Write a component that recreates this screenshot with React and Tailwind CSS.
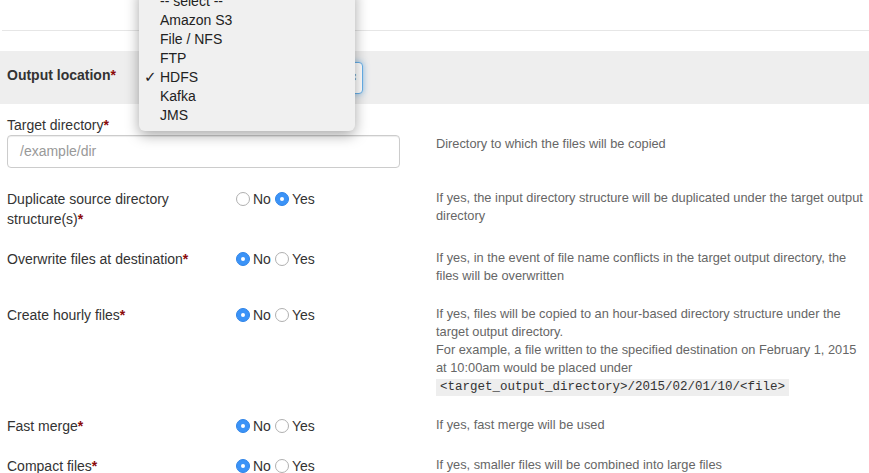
import React from "react";

const options = ["-- select --", "Amazon S3", "File / NFS", "FTP", "HDFS", "Kafka", "JMS"];

function Req() {
  return <span className="text-[#8b0a0a] font-bold">*</span>;
}

function Radio({ checked }) {
  if (checked) {
    return (
      <span className="w-[14px] h-[14px] rounded-full bg-[#3b93f7] border border-[#2f84e8] flex items-center justify-center shrink-0">
        <span className="w-[4px] h-[4px] rounded-full bg-white" />
      </span>
    );
  }
  return (
    <span className="w-[14px] h-[14px] rounded-full bg-white border border-[#b0b0b0] shrink-0" />
  );
}

function YesNo({ value }) {
  return (
    <div className="flex items-center h-[20px] text-[14px] text-[#333]">
      <Radio checked={value === "no"} />
      <span className="ml-[3px]">No</span>
      <span className="ml-[4px]" />
      <Radio checked={value === "yes"} />
      <span className="ml-[3px]">Yes</span>
    </div>
  );
}

function Row({ label, value, children }) {
  return (
    <div className="grid grid-cols-[229px_200px_1fr] mb-[20px]">
      <div className="text-[14px] leading-[20px] text-[#333] pr-4">{label}</div>
      <YesNo value={value} />
      <div className="text-[12.8px] leading-[18px] text-[#666] whitespace-nowrap">{children}</div>
    </div>
  );
}

export default function App() {
  return (
    <div
      className="relative w-full h-[473px] overflow-hidden bg-white"
      style={{ fontFamily: '"Liberation Sans", Arial, sans-serif' }}
    >
      <div className="h-[30px]" />
      <div className="ml-[2px] border-t border-[#e6e6e6]" />
      <div className="h-[20px]" />

      {/* Output location band */}
      <div className="h-[53px] bg-[#eeeeee] flex items-center pl-[7px]">
        <div className="w-[143px] pb-[4px] text-[14px] font-bold text-[#333]">
          Output location<Req />
        </div>
        <div className="w-[213px] h-[32px] bg-white border border-[#66afe9] rounded-[4px] shadow-[0_0_6px_rgba(102,175,233,0.7)] flex items-center justify-end pr-[4px] text-[11px] text-[#555]">
          ⇕
        </div>
      </div>

      {/* Target directory */}
      <div className="grid grid-cols-[429px_1fr] pl-[7px] mt-[11px]">
        <div>
          <div className="text-[14px] leading-[20px] text-[#333]">
            Target directory<Req />
          </div>
          <div className="w-[393px] h-[33px] border border-[#cccccc] rounded-[4px] flex items-center px-[12px] text-[14px] text-[#999] shadow-[inset_0_1px_1px_rgba(0,0,0,0.075)]">
            /example/dir
          </div>
        </div>
        <div className="pt-[20px] text-[12.8px] leading-[18px] text-[#666]">
          Directory to which the files will be copied
        </div>
      </div>

      <div className="pl-[7px] mt-[21px]">
        <Row
          value="yes"
          label={
            <>
              Duplicate source directory
              <br />
              structure(s)<Req />
            </>
          }
        >
          If yes, the input directory structure will be duplicated under the target output
          <br />
          directory
        </Row>
        <Row
          value="no"
          label={
            <>
              Overwrite files at destination<Req />
            </>
          }
        >
          If yes, in the event of file name conflicts in the target output directory, the
          <br />
          files will be overwritten
        </Row>
        <Row
          value="no"
          label={
            <>
              Create hourly files<Req />
            </>
          }
        >
          If yes, files will be copied to an hour-based directory structure under the
          <br />
          target output directory.
          <br />
          For example, a file written to the specified destination on February 1, 2015
          <br />
          at 10:00am would be placed under
          <br />
          <code
            className="inline-block mt-[1px] px-[4px] leading-[17px] bg-[#eeeeee] text-[#333] text-[12.5px]"
            style={{ fontFamily: '"Liberation Mono", "Courier New", monospace' }}
          >
            &lt;target_output_directory&gt;/2015/02/01/10/&lt;file&gt;
          </code>
        </Row>
        <Row
          value="no"
          label={
            <>
              Fast merge<Req />
            </>
          }
        >
          If yes, fast merge will be used
        </Row>
        <Row
          value="no"
          label={
            <>
              Compact files<Req />
            </>
          }
        >
          If yes, smaller files will be combined into large files
        </Row>
      </div>

      {/* Open native-style select menu */}
      <div className="absolute left-[139px] top-[-12px] w-[216px] bg-[#f0f0f0] rounded-b-[6px] shadow-[0_4px_14px_rgba(0,0,0,0.35)] pt-[4px] pb-[6px]">
        {options.map((o) => (
          <div key={o} className="relative h-[19px] leading-[19px] pl-[21px] text-[14px] text-[#222]">
            {o === "HDFS" && (
              <span
                className="absolute left-[5px] top-0 text-[15px] text-[#222]"
                style={{ fontFamily: '"DejaVu Sans", sans-serif' }}
              >
                ✓
              </span>
            )}
            {o}
          </div>
        ))}
      </div>
    </div>
  );
}
